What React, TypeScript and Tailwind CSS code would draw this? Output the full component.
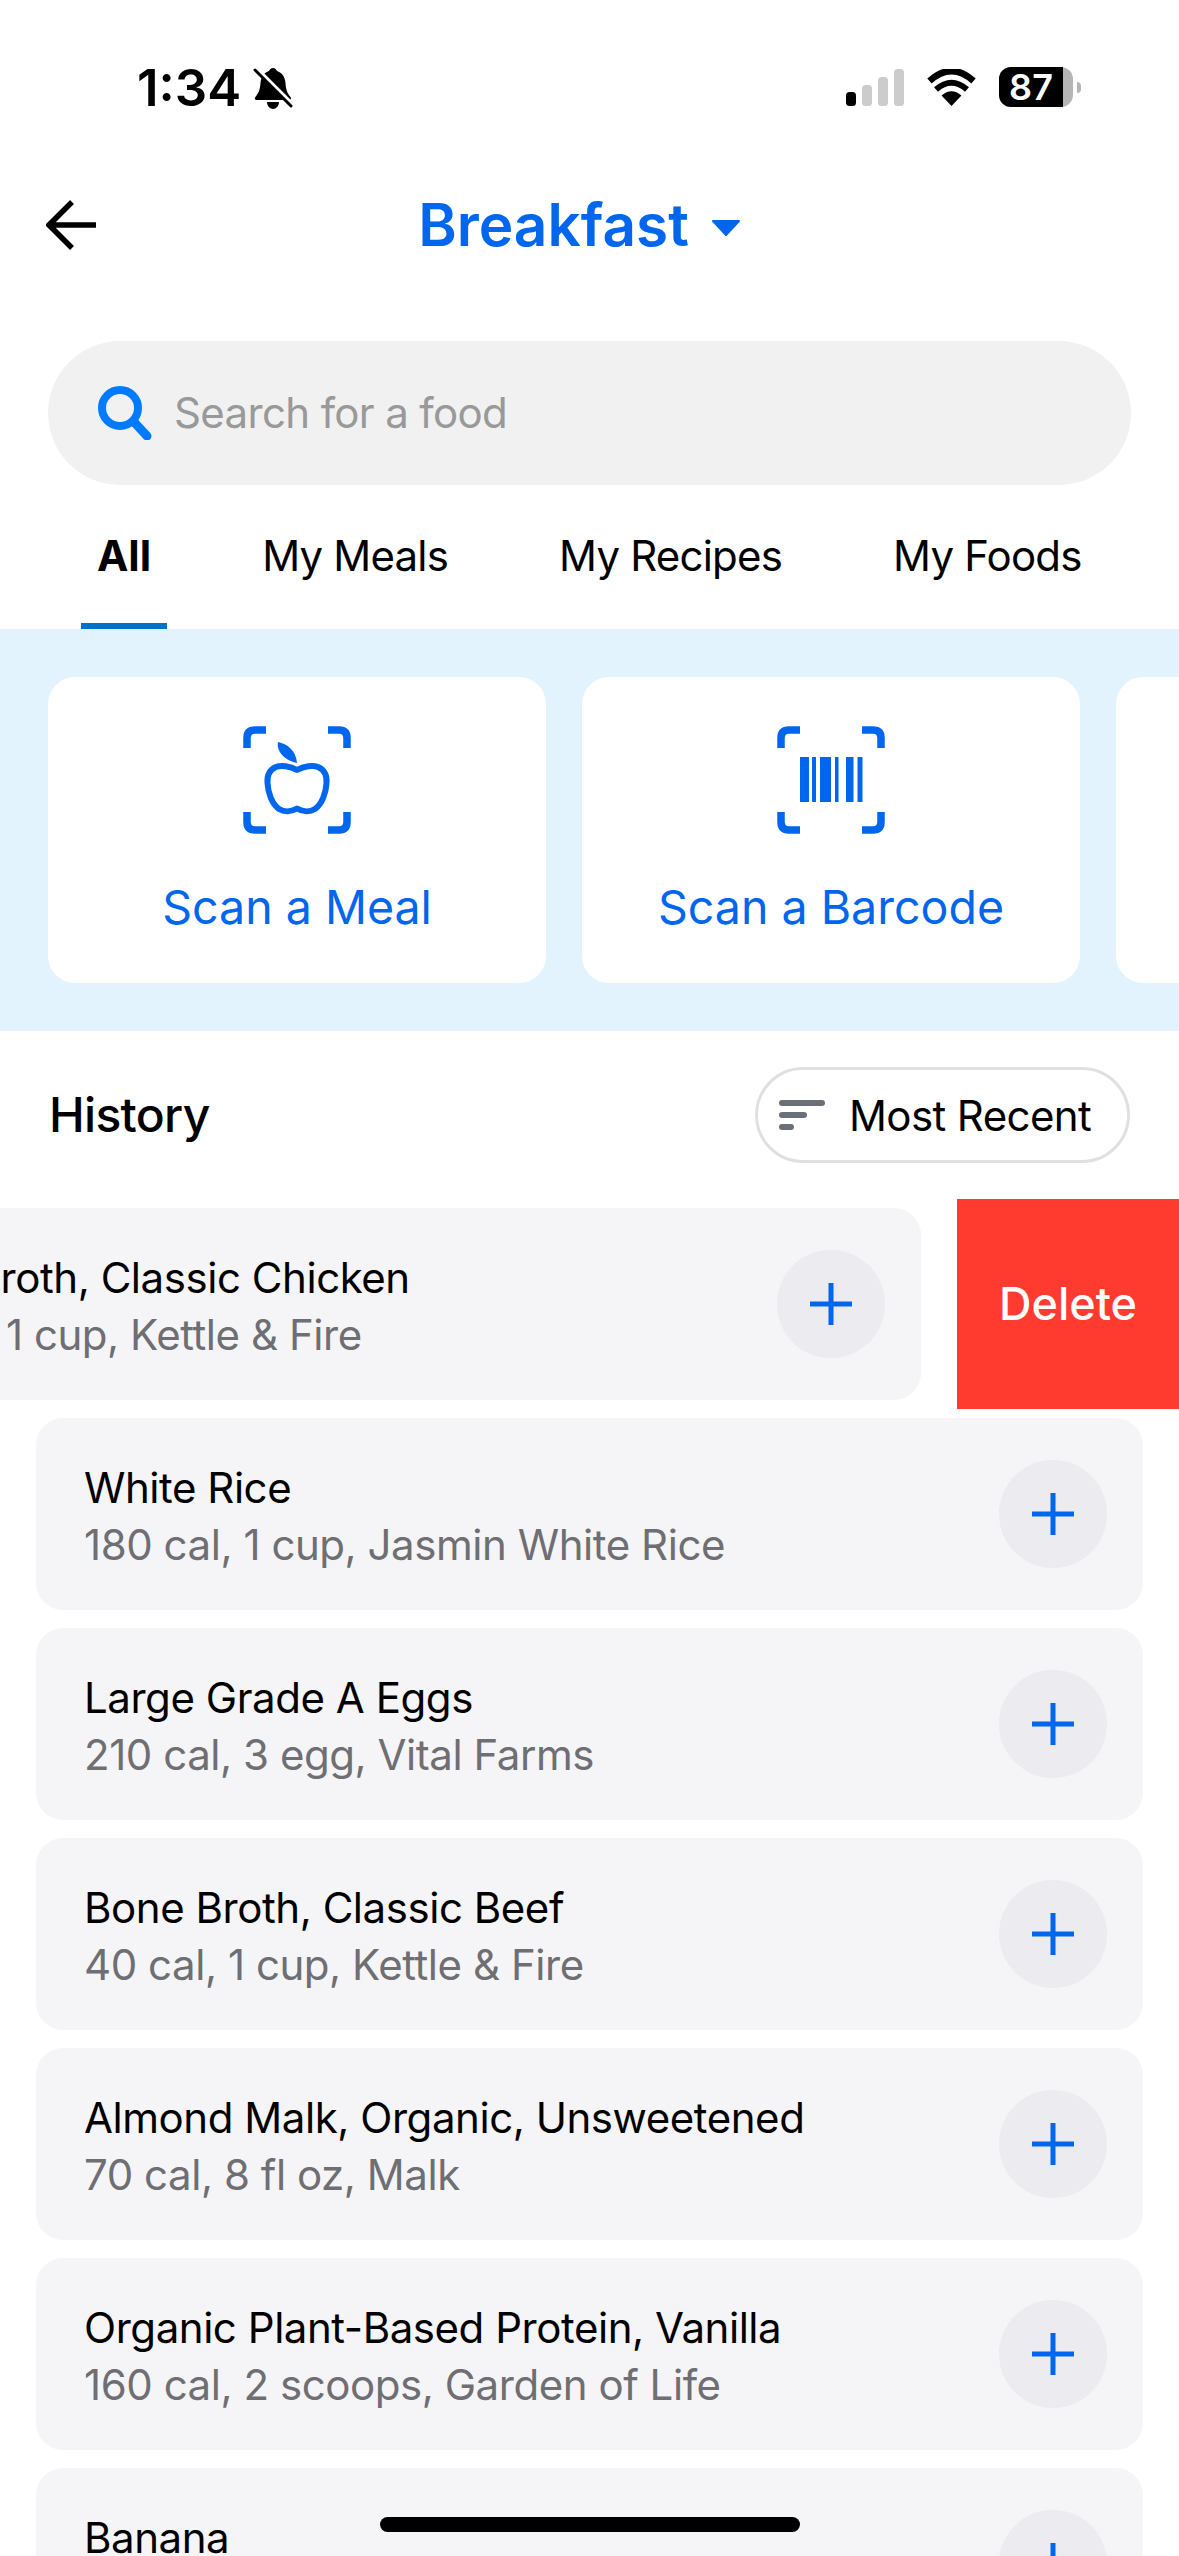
const FOODS = [
    { name: 'White Rice', info: '180 cal, 1 cup, Jasmin White Rice' },
    { name: 'Large Grade A Eggs', info: '210 cal, 3 egg, Vital Farms' },
    { name: 'Bone Broth, Classic Beef', info: '40 cal, 1 cup, Kettle & Fire' },
    { name: 'Almond Malk, Organic, Unsweetened', info: '70 cal, 8 fl oz, Malk' },
    { name: 'Organic Plant-Based Protein, Vanilla', info: '160 cal, 2 scoops, Garden of Life' },
    { name: 'Banana', info: '' },
];

function StatusBar() {
    return (
        <div className="flex h-[175px] items-start justify-between pl-[137px] pr-[98px] pt-[67px]">
            <div className="flex items-center">
                <span className="text-[51px] font-semibold leading-[42px]">1:34</span>
                <svg className="ml-[12px]" width="40" height="42" viewBox="0 0 40 42">
                    <path d="M20 1c2 0 3.500 1.500 4 3 5 1.500 8 6 8.500 12 .4 6 1.500 10 5 14 1 1.500 .5 3-1.500 3H4c-2 0-3-1.500-1.500-3 3-4 4.500-7 5-14C8 10 11 5.500 16 4c.5-1.500 2-3 4-3z" fill="#000" />
                    <path d="M14 35h12c0 4-3 7-6 7s-6-3-6-7z" fill="#000" />
                    <path d="M1 -1L37 35" stroke="#fff" strokeWidth="4" />
                    <path d="M2 3L38 39" stroke="#000" strokeWidth="3" strokeLinecap="round" />
                </svg>
            </div>
            <div className="flex items-start">
                <svg className="mt-[2px]" width="58" height="37" viewBox="0 0 58 37">
                    <rect x="0" y="23" width="10" height="14" rx="3.500" fill="#000" />
                    <rect x="16" y="16" width="10" height="21" rx="3.500" fill="#ccc" />
                    <rect x="32" y="8" width="10" height="29" rx="3.500" fill="#ccc" />
                    <rect x="48" y="0" width="10" height="37" rx="3.500" fill="#ccc" />
                </svg>
                <svg className="ml-[23px] mt-[2px]" width="49" height="37" viewBox="0 0 49 37">
                    <path d="M24.500 37L14.500 26.500Q24.500 18 34.500 26.500Z" fill="#000" />
                    <path d="M9 20.500Q24.500 7 40 20.500" stroke="#000" strokeWidth="6" fill="none" />
                    <path d="M2.500 12Q24.500 -8 46.500 12" stroke="#000" strokeWidth="6.500" fill="none" />
                </svg>
                <div className="ml-[23px] flex h-[40px] w-[74px] rounded-[12px] bg-[#b5b5b5]">
                    <div className="flex h-full w-[64px] items-center justify-center rounded-l-[12px] bg-black text-[36px] font-semibold leading-none text-white">87</div>
                </div>
                <div className="ml-[4px] mt-[15px] h-[11px] w-[4px] rounded-r-full bg-[#b5b5b5]" />
            </div>
        </div>
    );
}

function Brackets() {
    return (
        <g stroke="#0066ee" strokeWidth="7.500" fill="none">
            <path d="M23 4H12Q4 4 4 12V22" />
            <path d="M85 4H96Q104 4 104 12V22" />
            <path d="M23 104H12Q4 104 4 96V86" />
            <path d="M85 104H96Q104 104 104 96V86" />
        </g>
    );
}

function AppleIcon() {
    return (
        <svg width="108" height="108" viewBox="0 0 108 108" fill="none">
            <Brackets />
            <path d="M35 16C44 18 53 24 54 37C44 35 33 27 35 16Z" fill="#0066ee" />
            <path d="M54 44C47 40 38 39 33 41C26 44 24 50 24.500 57C25 67 29 78 36 83C41 86 48 86 54 82.500C60 86 67 86 72 83C79 78 83 67 83.500 57C84 50 82 44 75 41C70 39 61 40 54 44Z" stroke="#0066ee" strokeWidth="6" strokeLinejoin="round" />
        </svg>
    );
}

function BarcodeIcon() {
    const bars = [[23, 9], [35, 4], [43, 11], [58, 3.500], [69, 7.500], [80.500, 5]];
    return (
        <svg width="108" height="108" viewBox="0 0 108 108" fill="none">
            <Brackets />
            {bars.map(([x, w]) => (
                <rect key={x} x={x} y="31" width={w} height="45" fill="#0066ee" />
            ))}
        </svg>
    );
}

function FoodRow({ name, info }: { name: string; info: string }) {
    return (
        <div className="flex h-[192px] shrink-0 items-start justify-between rounded-[27px] bg-[#f5f5f7] pl-[48px] pr-[36px]">
            <div className="whitespace-nowrap pt-[41px] text-[42px] leading-[57px] tracking-[-0.45px]">
                <div className="text-black">{name}</div>
                <div className="text-[#6e6e73]">{info}</div>
            </div>
            <button className="mt-[42px] flex h-[108px] w-[108px] shrink-0 items-center justify-center rounded-full bg-[#ebebf0]">
                <svg width="44" height="44" viewBox="0 0 44 44">
                    <path d="M22 1V43M1 22H43" stroke="#0066ee" strokeWidth="5" />
                </svg>
            </button>
        </div>
    );
}

export default function App() {
    return (
        <div className="relative h-[2556px] w-[1179px] overflow-hidden bg-white text-black [font-family:Inter,sans-serif]">
            <StatusBar />

            {/* Header */}
            <div className="relative flex h-[100px] items-center justify-center pr-[20px]">
                <svg className="absolute left-[46px] top-[24px]" width="52" height="52" viewBox="0 0 52 52" fill="none">
                    <path d="M26 3L3 26L26 49M3 26H50" stroke="#000" strokeWidth="5.500" />
                </svg>
                <span className="text-[58.5px] font-semibold leading-none text-[#0066ee]">Breakfast</span>
                <svg className="ml-[22px] mt-[6px]" width="30" height="16" viewBox="0 0 30 16">
                    <path d="M2 1H28L15 15Z" fill="#0066ee" stroke="#0066ee" strokeLinejoin="round" strokeWidth="2" />
                </svg>
            </div>

            {/* Search */}
            <div className="mx-[48px] mt-[66px] flex h-[144px] items-center rounded-full bg-[#f1f1f1] pl-[48px]">
                <svg width="56" height="54" viewBox="0 0 56 54" fill="none">
                    <circle cx="24" cy="22" r="18" stroke="#007aff" strokeWidth="8" />
                    <path d="M38 36L51 50" stroke="#007aff" strokeWidth="9" strokeLinecap="round" />
                </svg>
                <span className="mb-[2px] ml-[22px] text-[42px] tracking-[-0.65px] text-[#999999]">Search for a food</span>
            </div>

            {/* Tabs */}
            <div className="flex h-[144px] gap-[79px] pl-[81px] text-[42px]">
                {['All', 'My Meals', 'My Recipes', 'My Foods'].map((t, i) => (
                    <div
                        key={t}
                        className={i === 0
                            ? 'flex items-center whitespace-nowrap border-b-[6px] border-[#0070c9] px-[16px] pb-[2px] pt-[4px] font-bold'
                            : 'flex items-center whitespace-nowrap border-b-[6px] border-transparent px-[16px] pb-[2px] pt-[4px] tracking-[-0.8px]'}
                    >
                        {t}
                    </div>
                ))}
            </div>

            {/* Scan cards */}
            <div className="flex h-[402px] gap-[36px] overflow-hidden bg-[#e3f3fe] py-[48px] pl-[48px]">
                <div className="flex w-[498px] shrink-0 flex-col items-center rounded-[27px] bg-white pt-[49px]">
                    <AppleIcon />
                    <span className="mt-[45px] text-[46.5px] leading-[56px] text-[#0066ee]">Scan a Meal</span>
                </div>
                <div className="flex w-[498px] shrink-0 flex-col items-center rounded-[27px] bg-white pt-[49px]">
                    <BarcodeIcon />
                    <span className="mt-[45px] text-[46.5px] leading-[56px] text-[#0066ee]">Scan a Barcode</span>
                </div>
                <div className="w-[498px] shrink-0 rounded-[27px] bg-white" />
            </div>

            {/* History header */}
            <div className="flex items-center justify-between pl-[49px] pr-[49px] pt-[36px]">
                <span className="text-[48px] font-medium leading-[60px] tracking-[-0.7px]">History</span>
                <div className="flex h-[96px] w-[375px] items-center rounded-full border-[3px] border-[#e0e0e0] pl-[21px]">
                    <svg width="46" height="30" viewBox="0 0 46 30">
                        <rect x="0" y="0" width="46" height="6" rx="3" fill="#6b7078" />
                        <rect x="0" y="12" width="28" height="6" rx="3" fill="#6b7078" />
                        <rect x="0" y="24" width="15" height="6" rx="3" fill="#6b7078" />
                    </svg>
                    <span className="ml-[24px] whitespace-nowrap text-[42px] tracking-[-0.6px]">Most Recent</span>
                </div>
            </div>

            {/* Food list */}
            <div className="mt-[45px] flex flex-col gap-[18px] px-[36px]">
                <div className="relative h-[192px]">
                    <div className="-translate-x-[222px]">
                        <FoodRow name="Bone Broth, Classic Chicken" info="40 cal, 1 cup, Kettle & Fire" />
                    </div>
                    <button className="absolute -right-[36px] -top-[9px] h-[210px] w-[222px] bg-[#ff3b30] text-[45px] font-medium text-white">
                        Delete
                    </button>
                </div>
                {FOODS.map((f) => (
                    <FoodRow key={f.name} name={f.name} info={f.info} />
                ))}
            </div>

            {/* Home indicator */}
            <div className="absolute bottom-[24px] left-[380px] h-[15px] w-[420px] rounded-full bg-black" />
        </div>
    );
}
